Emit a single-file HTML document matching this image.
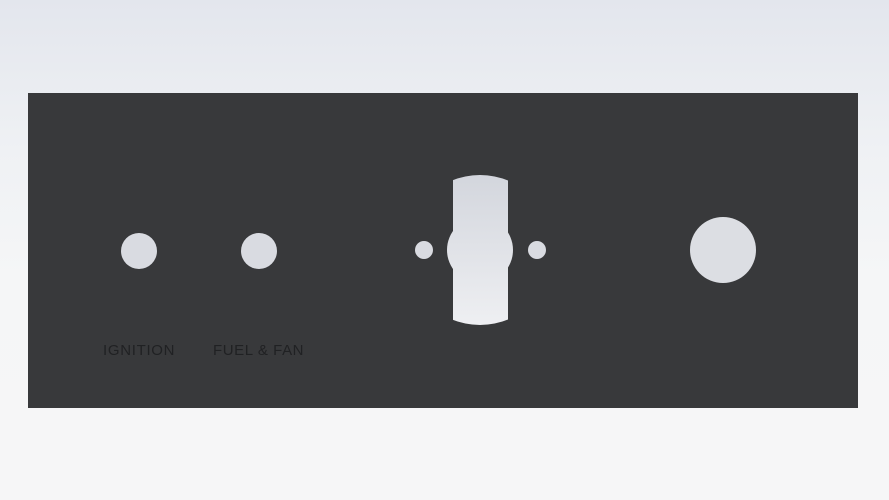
<!DOCTYPE html>
<html><head><style>
html,body{margin:0;padding:0;width:889px;height:500px;overflow:hidden;}
body{background:linear-gradient(180deg,#e3e6ed 0%,#eff1f4 30%,#f5f6f7 55%,#f6f6f7 100%);position:relative;font-family:"Liberation Sans",sans-serif;}
svg{position:absolute;left:0;top:0}
</style></head><body>
<svg width="889" height="500" viewBox="0 0 889 500">
<defs>
<linearGradient id="h" gradientUnits="userSpaceOnUse" x1="0" y1="175" x2="0" y2="325">
<stop offset="0" stop-color="#d3d6dd"/><stop offset="1" stop-color="#eeeff2"/>
</linearGradient>
<clipPath id="c"><circle cx="480" cy="250" r="75"/></clipPath>
</defs>
<rect x="28" y="93" width="830" height="315" fill="#38393b"/>
<circle cx="139" cy="251" r="18" fill="#d9dbe1"/>
<circle cx="259" cy="251" r="18" fill="#d9dbe1"/>
<circle cx="723" cy="250" r="33" fill="#dcdee3"/>
<circle cx="424" cy="250" r="9" fill="#d9dbe1"/>
<circle cx="537" cy="250" r="9" fill="#d9dbe1"/>
<g fill="url(#h)">
<rect x="453" y="170" width="55" height="160" clip-path="url(#c)"/>
<circle cx="480" cy="250" r="33"/>
</g>
<text x="103" y="355" font-size="15" fill="#202123" font-family="Liberation Sans, sans-serif" letter-spacing="0.5" textLength="72">IGNITION</text>
<text x="213" y="355" font-size="15" fill="#202123" font-family="Liberation Sans, sans-serif" letter-spacing="0.5" textLength="91">FUEL &amp; FAN</text>
</svg>
</body></html>
